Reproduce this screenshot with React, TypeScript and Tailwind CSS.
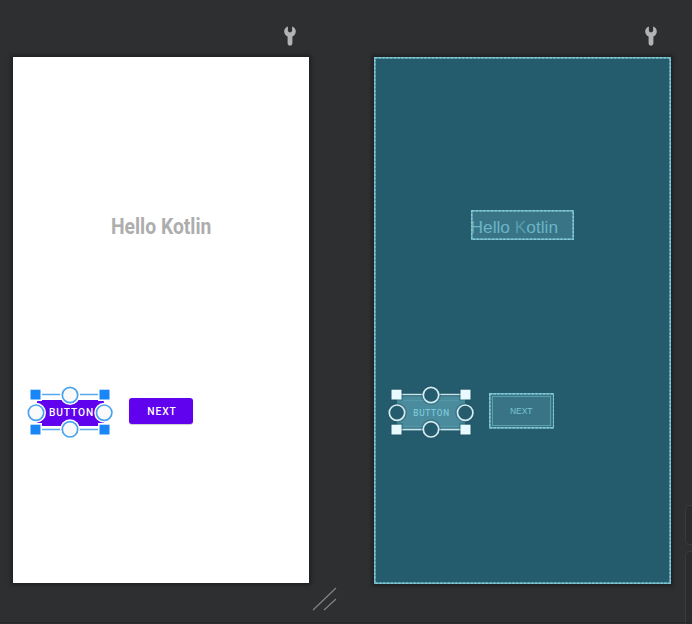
import React from "react";

function Wrench() {
  return (
    <svg width="12" height="20" viewBox="0 0 12 20" className="block">
      <path
        d="M3.9 0.6C1.5 1.4 0.2 3.2 0.2 5.5C0.2 7.8 1.5 9.6 3.6 10.5V17.3C3.6 20.4 8.4 20.4 8.4 17.3V10.5C10.5 9.6 11.8 7.8 11.8 5.5C11.8 3.2 10.5 1.4 8.1 0.6V5L7 6.2H5L3.9 5Z"
        fill="#b1b3b5"
      />
    </svg>
  );
}

type SelectionProps = {
  line: string;
  square: string;
  fill: string;
  ring: string;
  halo: string;
  haloOpacity: number;
};

/* Resize and anchor handles around the selected widget. */
function Selection({ line, square, fill, ring, halo, haloOpacity }: SelectionProps) {
  const corners = [
    [10.5, 9.5],
    [79.5, 9.5],
    [10.5, 44.5],
    [79.5, 44.5],
  ];
  const anchors = [
    [45, 10],
    [11, 27.7],
    [79.2, 27.7],
    [45, 44.3],
  ];
  return (
    <svg width="90" height="56" viewBox="0 0 90 56" className="absolute inset-0">
      <path d="M10 9.5H79M10 44.5H79" stroke={halo} strokeOpacity={haloOpacity} strokeWidth="3.8" />
      <path d="M10 9.5H79M10 44.5H79" stroke={line} strokeWidth="1.7" />
      {corners.map(([x, y]) => (
        <g key={`${x}-${y}`}>
          <rect x={x - 6.5} y={y - 6.5} width="13" height="13" fill={halo} fillOpacity={haloOpacity} />
          <rect x={x - 5} y={y - 4.8} width="10" height="9.8" fill={square} />
        </g>
      ))}
      {anchors.map(([x, y]) => (
        <g key={`${x}-${y}`}>
          <circle cx={x} cy={y} r="10" fill={halo} fillOpacity={haloOpacity} />
          <circle cx={x} cy={y} r="7.7" fill={fill} stroke={ring} strokeWidth="1.7" />
        </g>
      ))}
    </svg>
  );
}

function DashedFrame({ width, height }: { width: number; height: number }) {
  return (
    <svg width={width} height={height} className="pointer-events-none absolute inset-0">
      <g fill="none" strokeWidth="1.5">
        <rect x="0.75" y="0.75" width={width - 1.5} height={height - 1.5} stroke="#62adbc" />
        <rect x="0.75" y="0.75" width={width - 1.5} height={height - 1.5} stroke="#86c8d5" strokeDasharray="2.4 1.4" />
      </g>
    </svg>
  );
}

function DesignSurface() {
  return (
    <div className="flex h-[525.5px] flex-col bg-white pt-[158px] shadow-[0_0_4px_2px_rgba(0,0,0,0.35)]">
      <h1 className="ml-[97.5px] h-6 origin-left scale-x-[0.905] self-start whitespace-nowrap font-['Roboto',sans-serif] text-[21.3px] font-bold leading-6 text-[#adadad]">
        Hello Kotlin
      </h1>
      <div className="mt-[146px] flex items-start gap-[14px] pl-[12px]">
        <div className="relative flex h-[56px] w-[90px] items-center justify-center">
          <div className="h-[26px] w-[67px] rounded-[2px] bg-[#6002ee]" />
          <Selection line="#5aa9ec" square="#1886f7" fill="#fafafa" ring="#4ba3ee" halo="#ffffff" haloOpacity={1} />
          <span className="absolute inset-0 flex items-center justify-center pl-[3px] font-['Roboto',sans-serif] text-[10.2px] font-medium tracking-[0.9px] text-white">
            BUTTON
          </span>
        </div>
        <div className="mt-[13.3px] flex h-[26px] w-[64px] items-center justify-center rounded-[3px] bg-[#6002ee] pl-[2px] pt-[2px] font-['Roboto',sans-serif] text-[10.3px] font-medium leading-[14px] tracking-[0.9px] text-white shadow-[0_1px_1px_rgba(0,0,0,0.2)]">
          NEXT
        </div>
      </div>
    </div>
  );
}

function BlueprintSurface() {
  return (
    <div className="relative flex h-[527px] flex-col bg-[#245c6e] pt-[153px] shadow-[0_0_4px_2px_rgba(0,0,0,0.35)]">
      <DashedFrame width={297} height={527} />
      <div className="relative ml-[97px] flex h-[30px] w-[103px] items-center bg-[#397486] pt-[4px]">
        <DashedFrame width={103} height={30} />
        <span className="whitespace-nowrap font-['Liberation_Sans',Arial,sans-serif] text-[17.3px] leading-5 text-[#6ab5c6]">
          Hello <span className="text-[#559dae]">K</span>otlin
        </span>
      </div>
      <div className="mt-[145px] flex items-start gap-[13px] pl-[12.4px]">
        <div className="relative flex h-[56px] w-[90px] items-center justify-center">
          <div className="h-[35px] w-[68px] bg-[#4a8b9d] py-[4px]">
            <div className="h-full border-y border-[#5497a8]" />
          </div>
          <Selection line="#c8e3ea" square="#e8faff" fill="#245c6e" ring="#d5ebf0" halo="#1f4f5f" haloOpacity={0.35} />
          <span className="absolute inset-0 flex items-center justify-center pl-px font-['Roboto',sans-serif] text-[8.3px] font-medium tracking-[0.7px] text-[#7bc8d8]">
            BUTTON
          </span>
        </div>
        <div className="relative mt-[8px] h-[35.5px] w-[65.5px] bg-[#397486] p-[3px]">
          <DashedFrame width={65.5} height={35.5} />
          <div className="flex h-full items-center justify-center border border-[#5b9fae] pr-px font-['Liberation_Sans',Arial,sans-serif] text-[8.5px] leading-3 text-[#78c5d4]">
            NEXT
          </div>
        </div>
      </div>
    </div>
  );
}

export default function App() {
  return (
    <main className="flex h-[624px] w-[692px] flex-col overflow-hidden bg-[#2e2f31]">
      <div className="flex h-[622px] shrink-0">
        <section className="ml-[13px] w-[296px] shrink-0">
          <header className="flex h-[57px] justify-end pr-[13px] pt-[26px]">
            <Wrench />
          </header>
          <DesignSurface />
        </section>
        <div className="flex w-[64.6px] shrink-0 items-end pb-[10px] pl-[3px]">
          <svg width="26" height="26" viewBox="0 0 26 26" className="block">
            <path d="M1 24L24 2M12 24L24 13" stroke="#858688" strokeWidth="1.1" fill="none" />
          </svg>
        </div>
        <section className="w-[297px] shrink-0">
          <header className="flex h-[57px] justify-end pr-[13.3px] pt-[26px]">
            <Wrench />
          </header>
          <BlueprintSurface />
        </section>
        <aside className="ml-[14.4px] flex w-[12px] shrink-0 flex-col gap-[6px] pt-[505px]">
          <div className="h-[40px] shrink-0 rounded-l-[4px] border border-[#3a3b3d] bg-[#2a2b2c]" />
          <div className="h-[80px] shrink-0 rounded-l-[4px] border border-[#3a3b3d] bg-[#2a2b2c]" />
        </aside>
      </div>
      <footer className="h-px shrink-0 bg-[#242527]" />
    </main>
  );
}
